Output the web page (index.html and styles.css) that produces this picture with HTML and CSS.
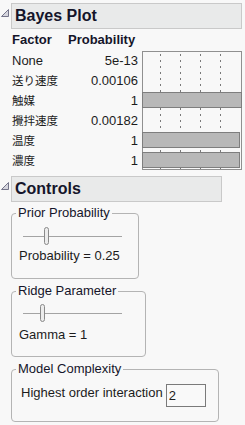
FILE: index.html
```html
<!DOCTYPE html>
<html lang="ja">
<head>
  <meta charset="UTF-8" />
  <meta name="viewport" content="width=device-width, initial-scale=1" />
  <title>Bayes Plot</title>
  <link rel="stylesheet" href="styles.css">
</head>
<body>
  <div class="outline">
    <div class="outline-head">
      <svg class="toggle" width="8" height="8" viewBox="0 0 8 8"><polygon points="7.5,0.5 7.5,7.5 0.5,7.5" fill="#d6d6de" stroke="#75758a" stroke-width="1"/></svg>
      <div class="title-bar bayes-title">Bayes Plot</div>
    </div>
    <div class="bayes">
      <div class="col-head">Factor</div>
      <div class="col-head prob-head">Probability</div>
      <div class="plot">
        <div class="grid-lines"><span></span><span></span><span></span><span></span><span></span></div>
        <div class="bars">
          <div class="bar-row"></div>
          <div class="bar-row"></div>
          <div class="bar-row"><div class="bar full"></div></div>
          <div class="bar-row"></div>
          <div class="bar-row"><div class="bar"></div></div>
          <div class="bar-row"><div class="bar"></div></div>
        </div>
      </div>

      <div class="factor">None</div><div class="prob">5e-13</div>
      <div class="factor jp">送り速度</div><div class="prob">0.00106</div>
      <div class="factor jp">触媒</div><div class="prob">1</div>
      <div class="factor jp">攪拌速度</div><div class="prob">0.00182</div>
      <div class="factor jp">温度</div><div class="prob">1</div>
      <div class="factor jp">濃度</div><div class="prob">1</div>
    </div>
  </div>

  <div class="outline controls">
    <div class="outline-head">
      <svg class="toggle" width="8" height="8" viewBox="0 0 8 8"><polygon points="7.5,0.5 7.5,7.5 0.5,7.5" fill="#d6d6de" stroke="#75758a" stroke-width="1"/></svg>
      <div class="title-bar controls-title">Controls</div>
    </div>
    <div class="controls-body">
      <div class="group prior">
        <div class="group-title">Prior Probability</div>
        <div class="slider"><div class="thumb" style="margin-left: 21px"></div></div>
        <div class="readout">Probability = 0.25</div>
      </div>

      <div class="group ridge">
        <div class="group-title">Ridge Parameter</div>
        <div class="slider"><div class="thumb" style="margin-left: 17px"></div></div>
        <div class="readout">Gamma = 1</div>
      </div>

      <div class="group model">
        <div class="group-title">Model Complexity</div>
        <div class="model-row">
          <span class="model-label">Highest order interaction</span>
          <input class="order-input" type="text" value="2">
        </div>
      </div>
    </div>
  </div>
</body>
</html>
```

FILE: styles.css
```css
html, body {
  margin: 0;
  padding: 0;
  background: #f8f8f8;
  font-family: "Liberation Sans", "Noto Sans CJK JP", sans-serif;
  font-size: 13px;
  color: #1c1c1c;
  overflow: hidden;
}
body {
  padding-top: 3px;
}
.outline-head {
  display: flex;
  align-items: flex-start;
}
.toggle {
  margin: 6px 2px 0 1px;
  flex: none;
}
.title-bar {
  height: 24px;
  line-height: 24px;
  background: #e9eaea;
  border: 1px solid #c9c9c9;
  padding-left: 3px;
  font-size: 16px;
  font-weight: bold;
  color: #15152a;
}
.bayes-title {
  width: 226px;
}
.controls-title {
  width: 206px;
}

/* Bayes table */
.bayes {
  display: grid;
  grid-template-columns: 56px 74px 100px;
  grid-template-rows: 22px repeat(6, 20px);
  padding-left: 12px;
}
.col-head {
  font-weight: bold;
  line-height: 22px;
  color: #15152a;
  white-space: nowrap;
}
.prob-head {
  grid-column: 2 / span 2;
}
.factor, .prob {
  line-height: 19px;
  white-space: nowrap;
}
.factor {
  grid-column: 1;
}
.prob {
  grid-column: 2;
  text-align: right;
  padding-right: 4px;
}
.factor.jp {
  font-size: 11.5px;
  font-family: "Noto Sans CJK JP", sans-serif;
}
.plot {
  grid-column: 3;
  grid-row: 2 / span 6;
  height: 119px;
  box-sizing: border-box;
  border: 1px solid #909090;
  display: grid;
}
.grid-lines, .bars {
  grid-area: 1 / 1;
}
.grid-lines {
  display: grid;
  grid-template-columns: 17px repeat(4, 20px);
}
.grid-lines span + span {
  background: repeating-linear-gradient(to bottom, transparent 0 2px, #7a7a7a 2px 4px, transparent 4px 6px) no-repeat left top / 1px 100%;
}
.bars {
  display: grid;
  grid-template-rows: repeat(5, 20px) 17px;
}
.bar {
  height: 16px;
  box-sizing: border-box;
  background: #b8b8b8;
  border: 1px solid #7e7e7e;
  margin-left: -1px;
  margin-right: 1px;
}
.bar.full {
  margin-right: -1px;
}

/* Controls */
.controls {
  margin-top: 5px;
}
.controls-body {
  padding-left: 11px;
}
.group {
  box-sizing: border-box;
  border: 1px solid #b4b4b4;
  border-radius: 4px;
  padding: 0 0 14px 7px;
  margin-top: 12px;
}
.group-title {
  display: table;
  margin: -8px 0 0 -3px;
  padding: 0 2px;
  line-height: 14px;
  background: #f8f8f8;
  color: #15152a;
}
.prior {
  width: 128px;
  margin-top: 11px;
  padding-bottom: 15px;
}
.ridge {
  width: 135px;
}
.model {
  width: 208px;
}
.slider {
  width: 99px;
  height: 18px;
  margin: 7px 0 0 4px;
  display: flex;
  background: linear-gradient(#a4a4a4, #a4a4a4) no-repeat left center / 100% 1px;
}
.ridge .slider {
  margin-top: 6px;
}
.thumb {
  width: 5px;
  height: 18px;
  box-sizing: border-box;
  border: 1px solid #8a8a8a;
  border-radius: 3px;
  background: #ececec;
}
.readout {
  margin-top: 4px;
  line-height: 14px;
}
.ridge .readout {
  margin-top: 6px;
}
.model-row {
  display: flex;
  align-items: flex-start;
  margin: 8px 0 0 2px;
}
.model-label {
  margin-top: 2px;
  line-height: 14px;
}
.order-input {
  width: 40px;
  height: 23px;
  box-sizing: border-box;
  margin: 0 0 0 3px;
  padding: 0 2px;
  border: 1px solid #7a7a7a;
  background: #f9f9f9;
  font: inherit;
  color: inherit;
  outline: none;
}
```
